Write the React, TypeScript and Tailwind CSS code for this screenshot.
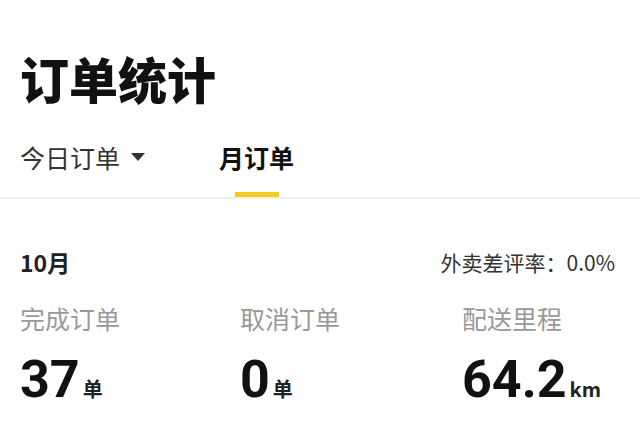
import React from 'react';

const cjk = { fontFamily: '"Noto Sans CJK SC", "Noto Sans", sans-serif' };
const num = { fontFamily: 'Roboto, "Noto Sans", sans-serif' };

interface StatProps {
  label: string;
  value: string;
  unit: string;
}

function Stat({ label, value, unit }: StatProps) {
  return (
    <div className="flex flex-col">
      <div className="text-[25px] leading-[25px] text-[#999999]">{label}</div>
      <div className="mt-[23px] flex items-baseline">
        <span style={num} className="text-[52px] leading-[52px] font-bold text-[#111111]">
          {value}
        </span>
        <span className="ml-[3px] text-[20px] font-bold text-[#222222]">{unit}</span>
      </div>
    </div>
  );
}

export default function App() {
  return (
    <div style={cjk} className="w-[640px] h-[447px] bg-white overflow-hidden">
      <div className="px-[20px] pt-[53px]">
        <h1 className="text-[49px] leading-[49px] font-black text-[#111111]">订单统计</h1>
      </div>

      {/* Tabs */}
      <div className="mt-[34px] flex items-start px-[20px]">
        <div className="flex items-center h-[42px]">
          <span className="text-[25px] leading-[25px] text-[#333333]">今日订单</span>
          <span className="ml-[11px] w-0 h-0 border-l-[7px] border-r-[7px] border-t-[8px] border-l-transparent border-r-transparent border-t-[#333333]" />
        </div>
        <div className="ml-[74px] flex flex-col items-center">
          <div className="h-[42px] flex items-center text-[25px] leading-[25px] font-bold text-[#111111]">月订单</div>
          <div className="mt-[14px] w-[44px] h-[5px] bg-[#f6cb1f]" />
        </div>
      </div>
      <div className="h-[2px] bg-[#f0f0f0]" />

      {/* Month summary */}
      <div className="px-[20px] pt-[52px] flex items-center justify-between pr-[25px]">
        <span className="text-[23px] leading-[23px] font-bold text-[#222222]">10月</span>
        <span className="text-[21px] leading-[21px] text-[#333333]">外卖差评率：0.0%</span>
      </div>

      <div className="mt-[32px] pl-[20px] grid grid-cols-[220px_222px_1fr]">
        <Stat label="完成订单" value="37" unit="单" />
        <Stat label="取消订单" value="0" unit="单" />
        <Stat label="配送里程" value="64.2" unit="km" />
      </div>
    </div>
  );
}
